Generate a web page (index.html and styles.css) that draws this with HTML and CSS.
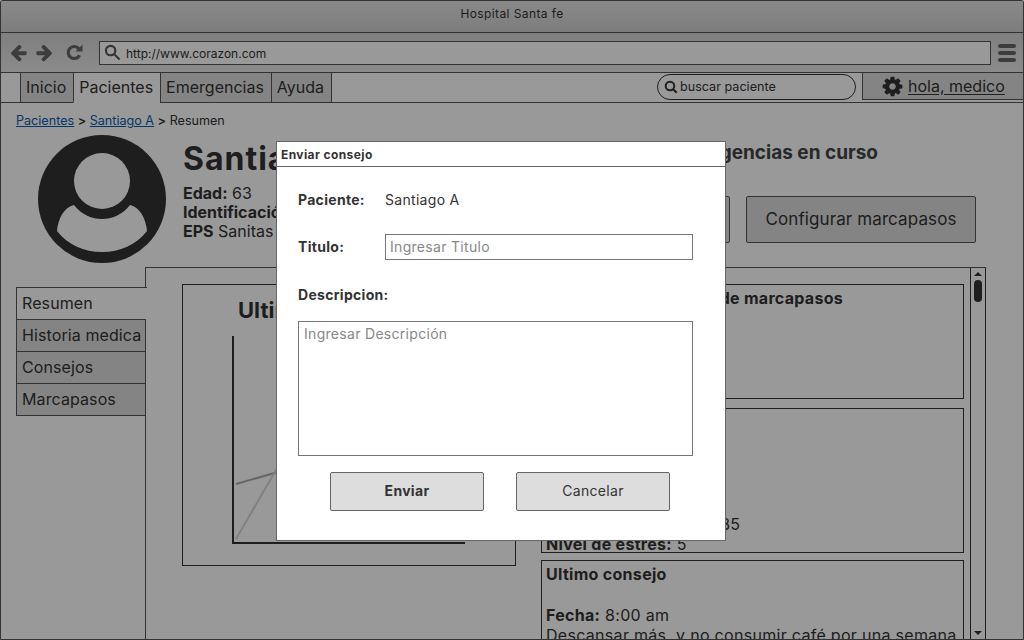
FILE: index.html
```html
<!DOCTYPE html>
<html lang="es">
<head>
<meta charset="UTF-8">
<meta name="viewport" content="width=device-width, initial-scale=1.0">
<title>Hospital Santa fe</title>
<link rel="stylesheet" href="styles.css">
</head>
<body>
  <div class="window">
    <div class="titlebar">Hospital Santa fe</div>

    <div class="toolbar">
      <svg class="nav-icon" viewBox="0 0 1792 1792"><path d="M1664 896v128q0 53-32.5 90.5t-84.5 37.5h-704l293 294q38 36 38 90t-38 90l-75 76q-37 37-90 37-52 0-91-37l-651-652q-37-37-37-90 0-52 37-91l651-650q38-38 91-38 52 0 90 38l75 74q38 38 38 91t-38 91l-293 293h704q52 0 84.5 37.5t32.5 90.5z"/></svg>
      <svg class="nav-icon" viewBox="0 0 1792 1792"><path d="M1600 960q0 54-37 91l-651 651q-39 37-91 37-51 0-90-37l-75-75q-38-38-38-91t38-91l293-293h-704q-52 0-84.5-37.5t-32.5-90.5v-128q0-53 32.5-90.5t84.5-37.5h704l-293-294q-38-36-38-90t38-90l75-75q38-38 90-38 53 0 91 38l651 651q37 35 37 90z"/></svg>
      <svg class="reload" viewBox="0 0 17 17"><path class="reload-arc" d="M13.600 11.200A6 6 0 1 1 12.800 4.600"/><path class="reload-head" d="M9.500 7.500H16.500V0.500Z"/></svg>
      <div class="urlbar">
        <svg class="url-search" viewBox="0 0 18 18"><circle cx="7" cy="7" r="5"/><path d="M11 11l5.500 5.500"/></svg>
        <span>http://www.corazon.com</span>
      </div>
      <div class="burger"><i></i><i></i><i></i></div>
    </div>

    <div class="menubar">
      <div class="menu-tabs">
        <div class="menu-tab">Inicio</div>
        <div class="menu-tab active">Pacientes</div>
        <div class="menu-tab">Emergencias</div>
        <div class="menu-tab">Ayuda</div>
      </div>
      <div class="searchbox">
        <svg class="search-icon" viewBox="0 0 14 14"><circle cx="6" cy="6" r="4.300"/><path d="M9.200 9.200l3.500 3.500"/></svg>
        <span>buscar paciente</span>
      </div>
      <div class="userbox">
        <svg class="gear" viewBox="0 0 1792 1792"><path d="M1152 896q0-106-75-181t-181-75-181 75-75 181 75 181 181 75 181-75 75-181zm512-109v222q0 12-8 23t-20 13l-185 28q-19 54-39 91 35 50 107 138 10 12 10 25t-9 23q-27 37-99 108t-94 71q-12 0-26-9l-138-108q-44 23-91 38-16 136-29 186-7 28-36 28h-222q-14 0-24.500-8.500t-11.500-21.500l-28-184q-49-16-90-37l-141 107q-10 9-25 9-14 0-25-11-126-114-165-168-7-10-7-23 0-12 8-23 15-21 51-66.500t54-70.500q-27-50-41-99l-183-27q-13-2-21-12.500t-8-23.500v-222q0-12 8-23t19-13l186-28q14-46 39-92-40-57-107-138-10-12-10-24 0-10 9-23 26-36 98.500-107.500t94.500-71.500q13 0 26 10l138 107q44-23 91-38 16-136 29-186 7-28 36-28h222q14 0 24.500 8.500t11.500 21.500l28 184q49 16 90 37l142-107q9-9 24-9 13 0 25 10 129 119 165 170 7 8 7 22 0 12-8 23-15 21-51 66.500t-54 70.500q26 50 41 98l183 28q13 2 21 12.500t8 23.500z"/></svg>
        <a class="user-link">hola, medico</a>
      </div>
    </div>

    <div class="page">
      <div class="crumbs">
        <a>Pacientes</a> <b>&gt;</b> <a>Santiago A</a> <b>&gt;</b> <span>Resumen</span>
      </div>

      <div class="patient">
        <svg class="avatar" viewBox="0 0 128 128">
          <circle class="avatar-bg" cx="64" cy="64" r="64"/>
          <circle class="avatar-fg" cx="64" cy="46" r="28"/>
          <path class="avatar-fg" d="M19 96C20 84 26 72 36 70C44 80 54 84 64 84C74 84 84 80 92 70C102 72 108 84 109 96C98 110 82 117 64 117C46 117 30 110 19 96Z"/>
        </svg>
        <div class="patient-info">
          <div class="patient-name">Santiago A</div>
          <div class="patient-line"><b>Edad:</b> 63</div>
          <div class="patient-line"><b>Identificación:</b> 1020</div>
          <div class="patient-line"><b>EPS</b> Sanitas</div>
        </div>
        <div class="patient-actions">
          <div class="alert-title">Emergencias en curso</div>
          <div class="action-row">
            <div class="btn-big">Enviar consejo</div>
            <div class="btn-big">Configurar marcapasos</div>
          </div>
        </div>
      </div>

      <div class="workspace">
        <div class="side-tabs">
          <div class="side-tab active">Resumen</div>
          <div class="side-tab">Historia medica</div>
          <div class="side-tab">Consejos</div>
          <div class="side-tab">Marcapasos</div>
        </div>
        <div class="panel">
          <div class="panel-body">
            <div class="chart-card">
              <div class="chart-title">Ultimos datos</div>
              <svg class="chart" width="240" height="210" viewBox="0 0 240 210">
                <path class="chart-axis" d="M1 0V207H233"/>
                <path class="chart-line" d="M4 148L60 132L120 100"/>
                <path class="chart-line light" d="M4 203L44 134L120 60"/>
              </svg>
            </div>
            <div class="cards">
              <div class="card card-a"><b>Configuracion actual de marcapasos</b></div>
              <div class="card card-b">
                <div><b>Frecuencia cardiaca:</b> 85</div>
                <div class="last-line"><b>Nivel de estres:</b> 5</div>
              </div>
              <div class="card card-c">
                <div><b>Ultimo consejo</b></div>
                <div class="blank"></div>
                <div><b>Fecha:</b> 8:00 am</div>
                <div>Descansar más, y no consumir café por una semana</div>
              </div>
            </div>
          </div>
          <div class="scrollbar">
            <i class="arrow-up"></i>
            <i class="thumb"></i>
            <i class="arrow-down"></i>
          </div>
        </div>
      </div>
    </div>
  </div>

  <div class="overlay"></div>

  <div class="modal">
    <div class="modal-title">Enviar consejo</div>
    <div class="modal-body">
      <div class="row-patient"><b>Paciente:</b><span>Santiago A</span></div>
      <div class="row-title"><b>Titulo:</b><div class="field">Ingresar Titulo</div></div>
      <div class="row-label"><b>Descripcion:</b></div>
      <div class="field area">Ingresar Descripción</div>
      <div class="modal-buttons">
        <div class="btn strong">Enviar</div>
        <div class="btn">Cancelar</div>
      </div>
    </div>
  </div>
</body>
</html>
```

FILE: styles.css
```css
* {
  box-sizing: border-box;
}
html, body {
  margin: 0;
  height: 640px;
  overflow: hidden;
}
body {
  font-family: Inter, "Liberation Sans", sans-serif;
  color: #333;
  background-color: #fff;
}

.window {
  height: 640px;
  display: flex;
  flex-direction: column;
  border: 1px solid #555;
  border-radius: 3px 3px 0 0;
  overflow: hidden;
}

/* barra de titulo */
.titlebar {
  height: 32px;
  flex: none;
  border-bottom: 1px solid #555;
  background: linear-gradient(#e6e6e6, #d0d0d0);
  text-align: center;
  font-size: 12px;
  line-height: 25px;
  letter-spacing: 0.4px;
}
.toolbar {
  height: 40px;
  flex: none;
  display: flex;
  align-items: center;
  padding: 0 7px 0 8px;
  border-bottom: 1px solid #555;
  background: linear-gradient(#d4d4d4, #e8e8e8);
}
.nav-icon {
  width: 19px;
  height: 19px;
  margin-right: 7px;
  fill: #666;
}
.reload {
  width: 17px;
  height: 17px;
  margin-left: 5px;
  flex: none;
}
.reload-arc {
  fill: none;
  stroke: #666;
  stroke-width: 3.2;
}
.reload-head {
  fill: #666;
}
.urlbar {
  flex: 1;
  height: 24px;
  margin: 0 7px 0 16px;
  border: 1px solid #555;
  background-color: #fff;
  display: flex;
  align-items: center;
  padding-left: 4px;
  font-size: 12px;
}
.urlbar span {
  padding-top: 1px;
}
.url-search {
  width: 17px;
  height: 17px;
  margin-right: 5px;
  fill: none;
  stroke: #555;
  stroke-width: 2.200;
}
.burger {
  width: 18px;
  display: flex;
  flex-direction: column;
  gap: 3px;
}
.burger i {
  height: 4px;
  border-radius: 2px;
  background-color: #666;
}

.menubar {
  height: 30px;
  flex: none;
  display: flex;
  border-bottom: 1px solid #555;
  background-color: #fff;
}
.menu-tabs {
  display: flex;
  margin-left: 19px;
  margin-bottom: -1px;
}
.menu-tab {
  padding: 0 7px 0 5px;
  border-left: 1px solid #555;
  border-bottom: 1px solid #555;
  background-color: #ddd;
  font-size: 16px;
  line-height: 28px;
}
.menu-tab:last-child {
  border-right: 1px solid #555;
}
.menu-tab.active {
  background-color: #fff;
  border-bottom-color: #fff;
}
.searchbox {
  width: 199px;
  height: 26px;
  margin: 1px 6px 0 auto;
  border: 1px solid #333;
  border-radius: 13px;
  background-color: #fff;
  display: flex;
  align-items: center;
  padding: 0 0 1px 6px;
  font-size: 12.600px;
}
.search-icon {
  width: 14px;
  height: 14px;
  margin-right: 2px;
  fill: none;
  stroke: #333;
  stroke-width: 2;
}
.userbox {
  width: 161px;
  height: 27px;
  border-left: 1px solid #555;
  border-bottom: 1px solid #555;
  background-color: #ddd;
  display: flex;
  align-items: center;
  padding-left: 18px;
  font-size: 16px;
}
.gear {
  width: 23px;
  height: 23px;
  margin-right: 4px;
  fill: #333;
}
.user-link {
  text-decoration: underline;
  text-underline-offset: 2px;
}

/* contenido */
.page {
  flex: 1;
  min-height: 0;
  display: flex;
  flex-direction: column;
  overflow: hidden;
}
.crumbs {
  flex: none;
  height: 32px;
  padding: 9px 0 0 15px;
  font-size: 12.600px;
  line-height: 17px;
}
.crumbs a {
  color: #0b5cad;
  text-decoration: underline;
}
.crumbs b {
  font-weight: 600;
}

.patient {
  flex: none;
  height: 132px;
  display: flex;
  padding-left: 37px;
}
.avatar {
  width: 128px;
  height: 128px;
  flex: none;
}
.avatar-bg {
  fill: #333;
}
.avatar-fg {
  fill: #fff;
}
.patient-info {
  margin-left: 17px;
  width: 340px;
}
.patient-name {
  font-size: 32px;
  font-weight: 700;
  line-height: 38px;
  margin: 5px 0 6px;
  letter-spacing: 1px;
}
.patient-line {
  font-size: 16px;
  line-height: 19px;
}
.patient-actions {
  margin-left: auto;
  margin-right: 47px;
  display: flex;
  flex-direction: column;
  align-items: flex-end;
}
.alert-title {
  font-size: 19px;
  font-weight: 700;
  line-height: 24px;
  margin: 6px 98px 31px 0;
  color: #444;
}
.action-row {
  display: flex;
  gap: 16px;
}
.btn-big {
  width: 230px;
  height: 47px;
  border: 1px solid #555;
  border-radius: 2px;
  background-color: #ddd;
  font-size: 17px;
  line-height: 45px;
  text-align: center;
  letter-spacing: 0.1px;
}

.workspace {
  flex: 1;
  min-height: 0;
  display: flex;
  padding-left: 15px;
}
.side-tabs {
  width: 130px;
  flex: none;
  margin-top: 20px;
  position: relative;
}
.side-tab {
  height: 32px;
  padding-left: 5px;
  border: 1px solid #555;
  border-bottom: 0;
  background-color: #ddd;
  font-size: 16px;
  line-height: 31px;
  letter-spacing: 0.1px;
}
.side-tab:last-child {
  height: 33px;
  border-bottom: 1px solid #555;
}
.side-tab.active {
  background-color: #fff;
  border-right: 0;
  margin-right: -1px;
  position: relative;
}
.panel {
  width: 841px;
  flex: none;
  display: flex;
  margin-left: -1px;
  border-top: 1px solid #555;
  border-left: 1px solid #555;
}
.panel-body {
  flex: 1;
  min-width: 0;
  display: flex;
  align-items: flex-start;
  gap: 25px;
  padding: 16px 6px 0 36px;
  overflow: hidden;
}
.chart-card {
  width: 334px;
  height: 282px;
  flex: none;
  border: 1px solid #333;
  padding: 11px 0 0 49px;
}
.chart-title {
  font-size: 22px;
  font-weight: 700;
  line-height: 28px;
  margin: 0 0 12px 6px;
}
.chart {
  display: block;
}
.chart-axis {
  fill: none;
  stroke: #333;
  stroke-width: 2;
}
.chart-line {
  fill: none;
  stroke: #aaa;
  stroke-width: 2;
}
.chart-line.light {
  stroke: #d8d8d8;
}
.cards {
  flex: 1;
  min-width: 0;
  display: flex;
  flex-direction: column;
  gap: 9px;
  font-size: 16px;
  line-height: 20px;
  letter-spacing: 0.3px;
}
.card {
  flex: none;
  border: 1px solid #333;
  padding: 3px 4px;
}
.card-a {
  height: 115px;
}
.card-b {
  height: 145px;
  display: flex;
  flex-direction: column;
  justify-content: flex-end;
  padding-bottom: 0;
}
.last-line {
  margin-bottom: -2px;
}
.card-c {
  margin-top: -2px;
  height: 120px;
}
.blank {
  height: 21px;
}
.scrollbar {
  width: 16px;
  flex: none;
  position: relative;
  border-left: 1px solid #333;
  border-right: 1px solid #333;
}
.thumb {
  position: absolute;
  left: 3px;
  top: 12px;
  width: 8px;
  height: 22px;
  border-radius: 4px;
  background-color: #333;
}
.arrow-up, .arrow-down {
  position: absolute;
  left: 3px;
  width: 0;
  height: 0;
  border-left: 4px solid transparent;
  border-right: 4px solid transparent;
}
.arrow-up {
  top: 4px;
  border-bottom: 4px solid #333;
}
.arrow-down {
  bottom: 4px;
  border-top: 4px solid #333;
}

/* capa oscura y dialogo */
.overlay {
  position: fixed;
  inset: 0;
  z-index: 2;
  background-color: rgba(0, 0, 0, 0.4);
}
.modal {
  position: absolute;
  left: 276px;
  top: 141px;
  z-index: 3;
  width: 450px;
  height: 400px;
  border: 1px solid #666;
  background-color: #fff;
}
.modal-title {
  height: 25px;
  padding-left: 4px;
  border-bottom: 1px solid #666;
  font-size: 12px;
  font-weight: 700;
  line-height: 25px;
  letter-spacing: 0.4px;
}
.modal-body {
  padding: 0 32px 0 21px;
  font-size: 14px;
  letter-spacing: 0.3px;
}
.row-patient, .row-title {
  display: grid;
  grid-template-columns: 87px 1fr;
  align-items: center;
}
.row-patient {
  height: 20px;
  margin-top: 22px;
}
.row-title {
  margin-top: 25px;
}
.row-title b {
  margin-top: -2px;
}
.row-label {
  margin-top: 26px;
  height: 20px;
}
.field {
  height: 26px;
  border: 1px solid #777;
  padding-left: 4px;
  color: #888;
  line-height: 24px;
}
.field.area {
  height: 135px;
  margin-top: 15px;
  padding-left: 5px;
  line-height: 24px;
}
.modal-buttons {
  display: flex;
  justify-content: center;
  gap: 32px;
  margin-top: 16px;
  padding-left: 9px;
}
.btn {
  width: 154px;
  height: 39px;
  border: 1px solid #666;
  border-radius: 2px;
  background-color: #ddd;
  text-align: center;
  line-height: 35px;
}
.btn.strong {
  font-weight: 700;
}
```
